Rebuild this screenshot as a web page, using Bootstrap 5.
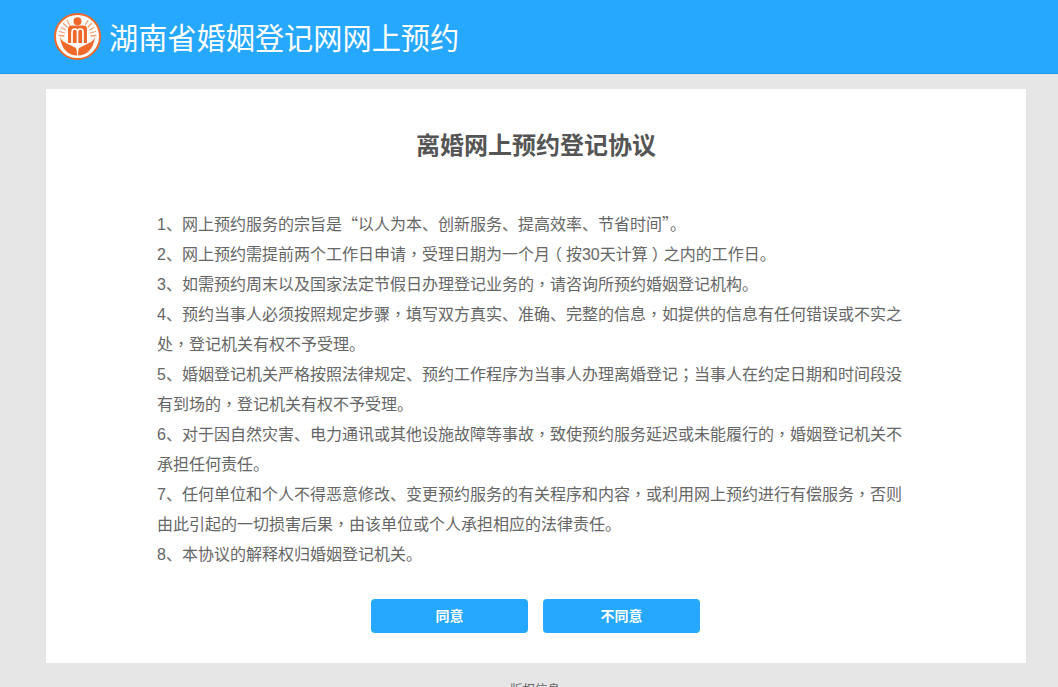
<!DOCTYPE html>
<html lang="zh-CN">
<head>
<meta charset="utf-8">
<title>湖南省婚姻登记网网上预约</title>
<link href="https://cdn.jsdelivr.net/npm/bootstrap@5.3.0/dist/css/bootstrap.min.css" rel="stylesheet">
<style>
html,body{height:687px;overflow:hidden}
body{background:#e6e6e6;font-family:"Liberation Sans","Noto Sans CJK SC",sans-serif;color:#666}
.site-head{height:74px;background:#26a8ff;border-bottom:1px solid #1f97e6;padding-left:54px}
.site-title{font-size:29.200px;color:#fff;line-height:1;margin:6px 0 0 8px;font-weight:400}
.sheet{width:980px;height:574px;margin:15px 0 0 46px;background:#fff;padding-top:41px}
.sheet-title{font-size:24px;font-weight:700;color:#555;line-height:32px;margin:0;text-align:center}
.terms{margin:48px 0 0 111px;width:750px;font-size:16px;line-height:30px;color:#666}
.terms p{margin:0}
.qt{font-family:"Noto Sans CJK SC",sans-serif;line-height:1}
.mid{font-family:"Noto Sans CJK TC",sans-serif;line-height:1}
.par{font-feature-settings:"halt";padding:0 4px}
.act{width:157px;height:34px;padding:0;background:#26a8ff;border:0;border-radius:4px;color:#fff;font-size:14px;font-weight:700;line-height:34px}
.acts{margin:29px 0 0 -1px;gap:15px}
.foot{font-size:12.500px;color:#666;margin:18px 0 0 12px;text-align:center}
</style>
</head>
<body>
<header class="site-head d-flex align-items-center">
<svg width="47" height="47" viewBox="0 0 47 47" aria-hidden="true">
<circle cx="23.500" cy="23.500" r="22.500" fill="#fff" stroke="#f0692a" stroke-width="2"/>
<g stroke="#f3a070" stroke-width="1.300" stroke-linecap="round"><path d="M5 22.500 10 23M5.500 18.500 10.500 20M7 14.500 11.500 17M9.500 10.500 13 14M13 7.500 15.500 11.500M42 22.500 37 23M41.500 18.500 36.500 20M40 14.500 35.500 17M37.500 10.500 34 14M34 7.500 31.500 11.500"/></g>
<circle cx="23.500" cy="8.200" r="4" fill="#f0692a"/>
<path fill="#f0692a" d="M14 30V16q0-3.500 3.500-3.500h12q3.500 0 3.500 3.500v14z"/>
<path fill="none" stroke="#fff" stroke-width="1.700" d="M18 30V19q0-3 2.800-3t2.700 3v11M23.500 19q0-3 2.800-3t2.700 3v11"/>
<path fill="#f0692a" d="M6 24c2 4 5 6 8 7l8 4c.8 2 1 4.500 1 7.500C14 42.500 7.500 36 6 24zM41 24c-2 4-5 6-8 7l-8 4c-.8 2-1 4.500-1 7.500C33 42.500 39.500 36 41 24z"/>
</svg>
<h1 class="site-title">湖南省婚姻登记网网上预约</h1>
</header>
<main class="sheet">
<h2 class="sheet-title">离婚网上预约登记协议</h2>
<div class="terms">
<p>1、网上预约服务的宗旨是<span class="qt">“</span>以人为本、创新服务、提高效率、节省时间<span class="qt">”</span>。</p>
<p>2、网上预约需提前两个工作日申请<span class="mid" lang="zh-TW">，</span>受理日期为一个月<span class="par">（</span>按30天计算<span class="par">）</span>之内的工作日。</p>
<p>3、如需预约周末以及国家法定节假日办理登记业务的<span class="mid" lang="zh-TW">，</span>请咨询所预约婚姻登记机构。</p>
<p>4、预约当事人必须按照规定步骤<span class="mid" lang="zh-TW">，</span>填写双方真实、准确、完整的信息<span class="mid" lang="zh-TW">，</span>如提供的信息有任何错误或不实之<br>处<span class="mid" lang="zh-TW">，</span>登记机关有权不予受理。</p>
<p>5、婚姻登记机关严格按照法律规定、预约工作程序为当事人办理离婚登记<span class="mid" lang="zh-TW">；</span>当事人在约定日期和时间段没<br>有到场的<span class="mid" lang="zh-TW">，</span>登记机关有权不予受理。</p>
<p>6、对于因自然灾害、电力通讯或其他设施故障等事故<span class="mid" lang="zh-TW">，</span>致使预约服务延迟或未能履行的<span class="mid" lang="zh-TW">，</span>婚姻登记机关不<br>承担任何责任。</p>
<p>7、任何单位和个人不得恶意修改、变更预约服务的有关程序和内容<span class="mid" lang="zh-TW">，</span>或利用网上预约进行有偿服务<span class="mid" lang="zh-TW">，</span>否则<br>由此引起的一切损害后果<span class="mid" lang="zh-TW">，</span>由该单位或个人承担相应的法律责任。</p>
<p>8、本协议的解释权归婚姻登记机关。</p>
</div>
<div class="acts d-flex justify-content-center">
<button type="button" class="btn act">同意</button>
<button type="button" class="btn act">不同意</button>
</div>
</main>
<footer class="foot">版权信息</footer>
<script src="https://cdn.jsdelivr.net/npm/bootstrap@5.3.0/dist/js/bootstrap.bundle.min.js"></script>
</body>
</html>
